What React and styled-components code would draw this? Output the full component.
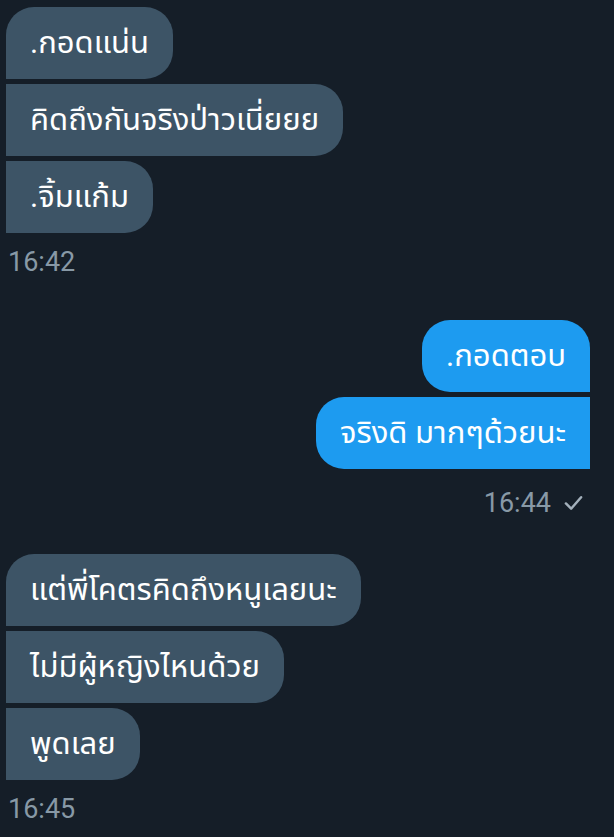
import React from 'react'
import styled, { createGlobalStyle } from 'styled-components'

const GlobalStyle = createGlobalStyle`
  html, body {
    margin: 0;
    padding: 0;
    background: #151e28;
  }
  body {
    font-family: Roboto, "Noto Sans Thai", "Noto Sans", sans-serif;
  }
`

const groups = [
  { out: false, time: '16:42', messages: ['.กอดแน่น', 'คิดถึงกันจริงป่าวเนี่ยยย', '.จิ้มแก้ม'] },
  { out: true, time: '16:44', messages: ['.กอดตอบ', 'จริงดิ มากๆด้วยนะ'] },
  { out: false, time: '16:45', messages: ['แต่พี่โคตรคิดถึงหนูเลยนะ', 'ไม่มีผู้หญิงไหนด้วย', 'พูดเลย'] },
]

function Check() {
  return (
    <CheckIcon viewBox="0 0 20 16">
      <path d="M2 8.5 L7.5 14 L18 2" />
    </CheckIcon>
  )
}

function App() {
  return (
    <>
      <GlobalStyle />
      <Chat>
        {groups.map((g, gi) => (
          <Group key={gi} $out={g.out}>
            {g.messages.map((m, i) => (
              <Bubble key={i} $out={g.out} $first={i === 0}>
                {m}
              </Bubble>
            ))}
            <Meta $out={g.out}>
              <span>{g.time}</span>
              {g.out && <Check />}
            </Meta>
          </Group>
        ))}
      </Chat>
    </>
  )
}

export default App

const Chat = styled.div`
  min-height: 837px;
  box-sizing: border-box;
  padding: 7px 24px 0 6px;
  display: flex;
  flex-direction: column;
`

const Group = styled.div`
  display: flex;
  flex-direction: column;
  align-items: ${p => (p.$out ? 'flex-end' : 'flex-start')};
  gap: 5px;
`

const Bubble = styled.div`
  height: 72px;
  line-height: 72px;
  padding: 0 24px;
  font-size: 31px;
  color: #ffffff;
  white-space: nowrap;
  background: ${p => (p.$out ? '#1d9bf0' : '#3d5466')};
  border-radius: ${p =>
    p.$out
      ? `28px ${p.$first ? 28 : 0}px 0 28px`
      : `${p.$first ? 28 : 0}px 28px 28px 0`};
`

const Meta = styled.div`
  display: flex;
  align-items: center;
  gap: 13px;
  height: 40px;
  margin-top: ${p => (p.$out ? 9 : 4)}px;
  margin-bottom: ${p => (p.$out ? 31 : 38)}px;
  padding: ${p => (p.$out ? '0 7px 0 0' : '0 0 0 2px')};
  font-size: 27px;
  color: #8899a6;
  font-family: Roboto, sans-serif;
`

const CheckIcon = styled.svg`
  width: 19px;
  height: 16px;
  fill: none;
  stroke: #a3b0bb;
  stroke-width: 2.6;
  stroke-linecap: round;
  stroke-linejoin: round;
`
